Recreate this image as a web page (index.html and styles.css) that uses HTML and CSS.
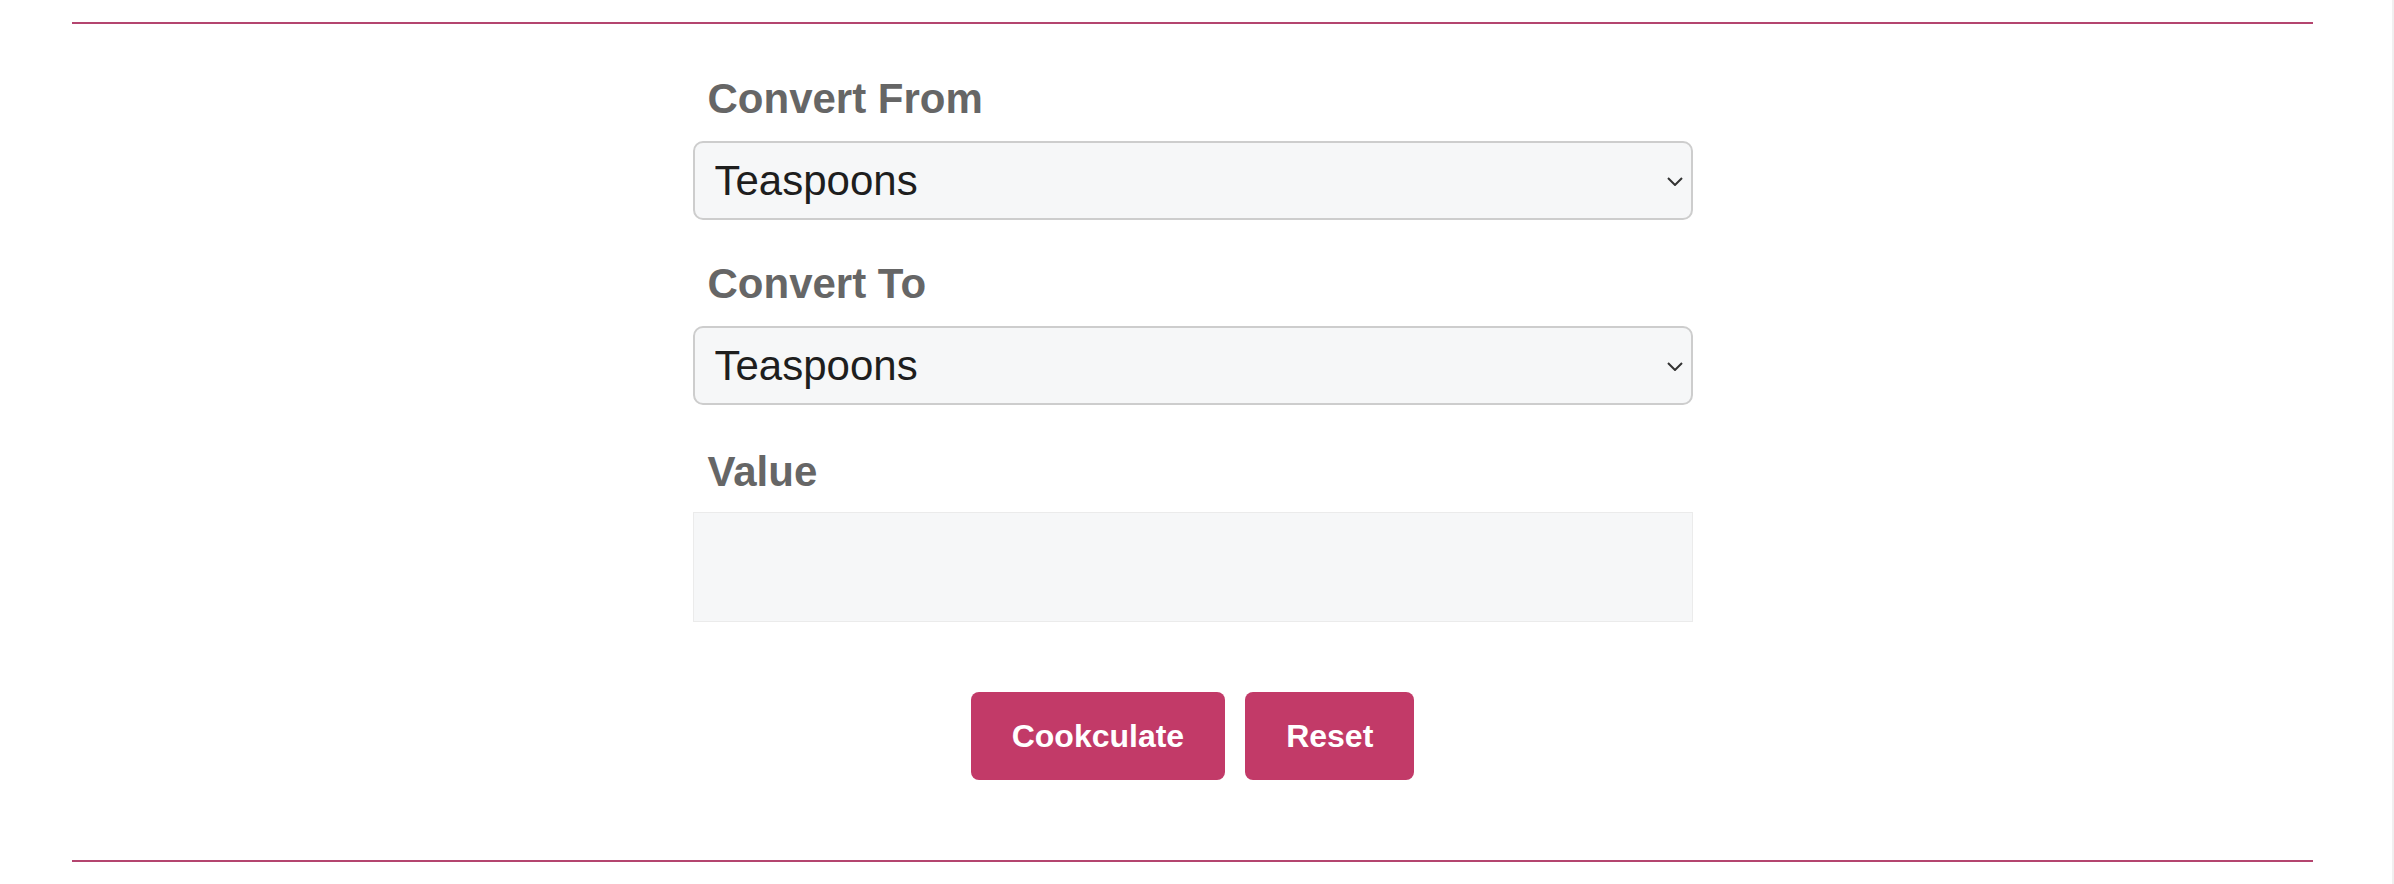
FILE: index.html
```html
<!DOCTYPE html>
<html lang="en">
<head>
<meta charset="utf-8">
<title>Cookculator</title>
<link rel="stylesheet" href="styles.css">
</head>
<body>
<div class="page">
  <hr class="rule rule-top">
  <form class="converter">
    <div class="group">
      <label class="label" for="from">Convert From</label>
      <div class="select-wrap">
        <select id="from" class="select">
          <option>Teaspoons</option>
          <option>Tablespoons</option>
          <option>Cups</option>
        </select>
        <svg class="chevron" width="16" height="9" viewBox="0 0 16 9" aria-hidden="true"><path d="M1 1 L8 8 L15 1" fill="none" stroke="#333" stroke-width="2"/></svg>
      </div>
    </div>
    <div class="group group-to">
      <label class="label" for="to">Convert To</label>
      <div class="select-wrap">
        <select id="to" class="select">
          <option>Teaspoons</option>
          <option>Tablespoons</option>
          <option>Cups</option>
        </select>
        <svg class="chevron" width="16" height="9" viewBox="0 0 16 9" aria-hidden="true"><path d="M1 1 L8 8 L15 1" fill="none" stroke="#333" stroke-width="2"/></svg>
      </div>
    </div>
    <div class="group group-value">
      <label class="label label-value" for="value">Value</label>
      <input id="value" class="input" type="text">
    </div>
    <div class="actions">
      <button type="button" class="btn">Cookculate</button>
      <button type="reset" class="btn">Reset</button>
    </div>
  </form>
  <hr class="rule rule-bottom">
</div>
</body>
</html>
```

FILE: styles.css
```css
html, body {
  margin: 0;
  padding: 0;
  background: #ffffff;
}

body {
  min-height: 100vh;
  box-shadow: inset -2px 0 0 #f0f0f0;
  font-family: "Liberation Sans", Arial, sans-serif;
}

.page {
  margin: 0 81px 0 72px;
  padding-top: 22px;
  overflow: hidden;
}

.rule {
  height: 2px;
  border: 0;
  margin: 0;
  background: #b4456f;
}

.converter {
  width: 1000px;
  margin: 50px auto 0;
}

.group {
  display: flex;
  flex-direction: column;
}

.group-to {
  margin-top: 39px;
}

.group-value {
  margin-top: 42px;
}

.label {
  display: block;
  height: 50px;
  line-height: 50px;
  font-size: 42px;
  font-weight: 700;
  color: #666666;
  padding-left: 15px;
  margin-bottom: 17px;
}

.label-value {
  margin-bottom: 15px;
}

.select-wrap {
  position: relative;
}

.select {
  display: block;
  width: 100%;
  height: 79px;
  box-sizing: border-box;
  appearance: none;
  -webkit-appearance: none;
  background: #f6f7f8;
  border: 2px solid #cdcdcd;
  border-radius: 10px;
  padding: 0 40px 0 20px;
  font-family: "Liberation Sans", Arial, sans-serif;
  font-size: 42px;
  color: #1e1e1e;
  outline: none;
}

.chevron {
  position: absolute;
  right: 10px;
  top: 36px;
  pointer-events: none;
}

.input {
  display: block;
  width: 100%;
  height: 110px;
  box-sizing: border-box;
  background: #f6f7f8;
  border: 1px solid #ebebeb;
  border-radius: 0;
  font-family: "Liberation Sans", Arial, sans-serif;
  font-size: 42px;
  outline: none;
}

.actions {
  display: flex;
  justify-content: center;
  gap: 20px;
  margin-top: 70px;
  margin-bottom: 80px;
}

.btn {
  height: 88px;
  padding: 0 41px;
  border: 0;
  border-radius: 8px;
  background: #c23a68;
  color: #ffffff;
  font-family: "Liberation Sans", Arial, sans-serif;
  font-size: 32px;
  font-weight: 700;
  cursor: pointer;
}
```
